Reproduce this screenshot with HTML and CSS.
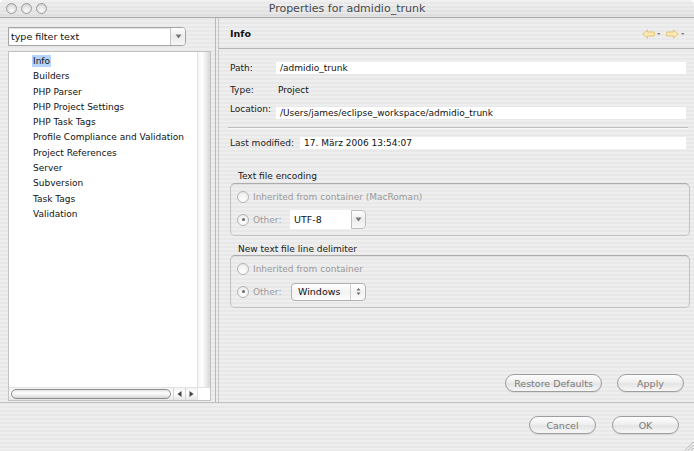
FILE: index.html
```html
<!DOCTYPE html>
<html>
<head>
<meta charset="utf-8">
<title>Properties for admidio_trunk</title>
<link rel="stylesheet" href="styles.css">
</head>
<body>
<div class="window">
  <div class="titlebar">
    <div class="lights"><span class="light"></span><span class="light"></span><span class="light"></span></div>
    <div class="title">Properties for admidio_trunk</div>
  </div>
  <div class="main">
    <div class="left">
      <div class="filter">
        <span class="filter-text">type filter text</span>
        <span class="filter-btn"><svg width="7" height="5" viewBox="0 0 7 5"><path d="M0.5 0.5 L6.5 0.5 L3.5 4.5 Z" fill="#777"/></svg></span>
      </div>
      <div class="list">
        <div class="list-body">
          <ul class="tree">
            <li><span class="sel">Info</span></li>
            <li>Builders</li>
            <li>PHP Parser</li>
            <li>PHP Project Settings</li>
            <li>PHP Task Tags</li>
            <li>Profile Compliance and Validation</li>
            <li>Project References</li>
            <li>Server</li>
            <li>Subversion</li>
            <li>Task Tags</li>
            <li>Validation</li>
          </ul>
          <div class="vscroll"></div>
        </div>
        <div class="hscroll">
          <div class="htrack"><div class="hthumb"></div></div>
          <div class="harrow"><svg width="5" height="6" viewBox="0 0 5 6"><path d="M4.5 0 L4.5 6 L0.5 3 Z" fill="#444"/></svg></div>
          <div class="harrow"><svg width="5" height="6" viewBox="0 0 5 6"><path d="M0.5 0 L0.5 6 L4.5 3 Z" fill="#444"/></svg></div>
          <div class="corner"></div>
        </div>
      </div>
    </div>
    <div class="right">
      <div class="header">
        <span class="htitle">Info</span>
        <span class="navs">
          <svg class="nav" width="20" height="10" viewBox="0 0 20 10"><path d="M0.7 5 L5.5 0.8 L5.5 3 L12.3 3 L12.3 7 L5.5 7 L5.5 9.2 Z" fill="#fbe9b6" stroke="#e3bf6c" stroke-width="0.9" stroke-linejoin="round"/><path d="M15 4 L18.5 4 L16.75 6 Z" fill="#7a7a7a"/></svg>
          <svg class="nav" width="20" height="10" viewBox="0 0 20 10"><path d="M12.3 5 L7.5 0.8 L7.5 3 L0.7 3 L0.7 7 L7.5 7 L7.5 9.2 Z" fill="#fbe9b6" stroke="#e3bf6c" stroke-width="0.9" stroke-linejoin="round"/><path d="M15 4 L18.5 4 L16.75 6 Z" fill="#7a7a7a"/></svg>
        </span>
      </div>
      <div class="props">
        <div class="row row-path"><span class="lbl">Path:</span><span class="box">/admidio_trunk</span></div>
        <div class="row row-type"><span class="lbl">Type:</span><span class="plain">Project</span></div>
        <div class="row row-loc"><span class="lbl lbl-up">Location:</span><span class="box">/Users/james/eclipse_workspace/admidio_trunk</span></div>
        <div class="sep"></div>
        <div class="row row-mod"><span class="lbl lbl-wide">Last modified:</span><span class="box">17. März 2006 13:54:07</span></div>
      </div>
      <div class="group-title first">Text file encoding</div>
      <div class="group">
        <div class="radio-row"><span class="radio"></span><span class="dim">Inherited from container (MacRoman)</span></div>
        <div class="radio-row tall"><span class="radio on"></span><span class="dim other">Other:</span>
          <span class="combo"><span class="combo-field">UTF-8</span><span class="combo-btn"><svg width="7" height="5" viewBox="0 0 7 5"><path d="M0.5 0.5 L6.5 0.5 L3.5 4.5 Z" fill="#777"/></svg></span></span>
        </div>
      </div>
      <div class="group-title second">New text file line delimiter</div>
      <div class="group">
        <div class="radio-row"><span class="radio"></span><span class="dim">Inherited from container</span></div>
        <div class="radio-row tall"><span class="radio on"></span><span class="dim other">Other:</span>
          <span class="popup"><span class="popup-text">Windows</span><span class="popup-arrows"><svg width="5" height="9" viewBox="0 0 5 9"><path d="M0.5 3.5 L4.5 3.5 L2.5 1 Z M0.5 5.5 L4.5 5.5 L2.5 8 Z" fill="#666"/></svg></span></span>
        </div>
      </div>
      <div class="actions">
        <span class="btn btn-wide">Restore Defaults</span>
        <span class="btn">Apply</span>
      </div>
    </div>
  </div>
  <div class="footer">
    <span class="btn">Cancel</span>
    <span class="btn">OK</span>
    <svg class="grip" width="11" height="11" viewBox="0 0 11 11"><path d="M10.5 2 L2 10.5 M10.5 5 L5 10.5 M10.5 8 L8 10.5" stroke="#8a8a8a" stroke-width="0.8"/><path d="M10.5 3 L3 10.5 M10.5 6 L6 10.5 M10.5 9 L9 10.5" stroke="#ffffff" stroke-width="0.8"/></svg>
  </div>
</div>
</body>
</html>
```

FILE: styles.css
```css
* { box-sizing: border-box; }
html, body { margin: 0; padding: 0; background: #ffffff; }
body {
  width: 694px;
  height: 451px;
  overflow: hidden;
  font-family: "DejaVu Sans", "Liberation Sans", sans-serif;
  font-size: 9px;
  color: #1a1a1a;
}
.window {
  width: 694px;
  height: 451px;
  display: flex;
  flex-direction: column;
  border-radius: 5px 5px 0 0;
  overflow: hidden;
  background: repeating-linear-gradient(180deg, #eeeeee 0 2px, #e8e8e8 2px 4px);
}

/* title bar */
.titlebar {
  height: 18px;
  flex: none;
  position: relative;
  display: flex;
  align-items: center;
  border-bottom: 1px solid #a9a9a9;
  background:
    linear-gradient(180deg, rgba(255,255,255,0.25), rgba(0,0,0,0.03)),
    repeating-linear-gradient(180deg, #ececec 0 2px, #e4e4e4 2px 4px);
}
.lights { display: flex; gap: 4px; padding-left: 6px; }
.light {
  width: 11px;
  height: 11px;
  border-radius: 50%;
  border: 1px solid #9c9c9c;
  background: radial-gradient(circle at 50% 70%, #fbfbfb 0, #e2e2e2 55%, #c4c4c4 100%);
}
.title {
  position: absolute;
  left: 0;
  right: 0;
  top: 2px;
  text-align: center;
  font-size: 11px;
  color: #4a4a4a;
  line-height: 13px;
}

/* main */
.main {
  height: 384px;
  flex: none;
  display: flex;
}
.left {
  width: 216px;
  flex: none;
  padding: 9px 0 0 8px;
  border-right: 1px solid #b9b9b9;
}
.filter {
  width: 178px;
  height: 19px;
  display: flex;
  background: #fff;
  border: 1px solid #a4a4a4;
  border-radius: 0 4px 4px 0;
  box-shadow: inset 0 1px 1px rgba(0,0,0,0.12);
}
.filter-text {
  flex: 1;
  padding-left: 2px;
  line-height: 17px;
  font-size: 9.5px;
  color: #111;
}
.filter-btn {
  width: 15px;
  border-left: 1px solid #c4c4c4;
  border-radius: 0 3px 3px 0;
  display: flex;
  align-items: center;
  justify-content: center;
  background: linear-gradient(180deg, #fefefe, #ececec 50%, #f6f6f6);
}
.list {
  margin-top: 5px;
  width: 203px;
  height: 350px;
  border: 1px solid #c2c2c2;
  background: #fff;
  display: flex;
  flex-direction: column;
}
.list-body { flex: 1; display: flex; }
.tree {
  flex: 1;
  list-style: none;
  margin: 0;
  padding: 2px 0 0 24px;
}
.tree li {
  height: 15.3px;
  line-height: 15.3px;
  white-space: nowrap;
  color: #111;
}
.sel {
  background: #b6d4fb;
  padding: 1px 1px;
  margin-left: -1px;
}
.vscroll {
  width: 13px;
  flex: none;
  background: linear-gradient(90deg, #f4f4f4, #ffffff 35%, #e9e9e9 70%, #d8d8d8);
  border-left: 1px solid #e2e2e2;
}
.hscroll {
  height: 13px;
  flex: none;
  display: flex;
  border-top: 1px solid #e2e2e2;
  background: linear-gradient(180deg, #f2f2f2, #ffffff 40%, #e6e6e6);
}
.htrack { flex: 1; padding: 1px 0 1px 2px; }
.hthumb {
  width: 160px;
  height: 10px;
  border: 1px solid #8c8c8c;
  border-radius: 6px;
  background: linear-gradient(180deg, #e4e4e4, #ffffff 40%, #d4d4d4);
}
.harrow {
  width: 12px;
  display: flex;
  align-items: center;
  justify-content: center;
  border-left: 1px solid #d6d6d6;
}
.corner { width: 13px; background: #fff; border-left: 1px solid #e2e2e2; }

/* right */
.right {
  flex: 1;
  margin-left: 2px;
  border-left: 1px solid #c8c8c8;
  display: flex;
  flex-direction: column;
  padding: 0 4px 10px 11px;
}
.header {
  height: 31px;
  margin: 0 -4px 0 -11px;
  padding: 0 6px 0 11px;
  display: flex;
  align-items: center;
  justify-content: space-between;
  border-bottom: 1px solid #b3b3b3;
}
.htitle { font-weight: bold; font-size: 9.5px; color: #111; }
.navs { display: flex; gap: 4px; margin-top: 1px; margin-right: 2px; }

.props { margin-right: 4px; }
.row { display: flex; align-items: center; height: 12px; }
.row-path { margin-top: 13px; }
.row-type { margin-top: 10px; }
.row-loc { margin-top: 11px; }
.row-mod { margin-top: 8px; }
.lbl { width: 46px; flex: none; color: #222; }
.lbl-up { position: relative; top: -4px; }
.lbl-wide { width: 70px; }
.box {
  flex: 1;
  height: 12px;
  line-height: 12px;
  background: #fff;
  padding-left: 4px;
  color: #111;
}
.plain { padding-left: 2px; color: #111; }
.sep {
  margin: 8px -2px 0 -2px;
  height: 1px;
  background: #bdbdbd;
  border-bottom: 1px solid #f8f8f8;
  box-sizing: content-box;
}

.group-title {
  margin: 7px 0 0 8px;
  height: 12px;
  line-height: 12px;
  color: #1a1a1a;
}
.group-title.first { margin-top: 21px; margin-bottom: 1px; }
.group {
  height: 53px;
  border: 1px solid #c3c3c3;
  border-top-color: #acacac;
  border-radius: 5px;
  box-shadow: inset 0 1px 1px rgba(0,0,0,0.07);
  padding: 6px 6px 0 6px;
  display: flex;
  flex-direction: column;
  gap: 6px;
}
.radio-row { display: flex; align-items: center; height: 14px; }
.radio-row.tall { height: 19px; }
.radio {
  width: 12px;
  height: 12px;
  border-radius: 50%;
  border: 1px solid #b4b4b4;
  background: radial-gradient(circle at 50% 70%, #ffffff 0, #f2f2f2 60%, #dcdcdc 100%);
  margin-right: 4px;
  flex: none;
  position: relative;
}
.radio.on::after {
  content: "";
  position: absolute;
  left: 3.5px;
  top: 3.5px;
  width: 3px;
  height: 3px;
  border-radius: 50%;
  background: #6a6a6a;
}
.dim { color: #9a9a9a; }
.other { width: 37px; }
.combo {
  width: 76px;
  height: 19px;
  display: flex;
  background: #fff;
  border-radius: 0 4px 4px 0;
}
.combo-field { flex: 1; padding-left: 4px; line-height: 19px; color: #111; font-size: 9.5px; }
.combo-btn {
  width: 15px;
  display: flex;
  align-items: center;
  justify-content: center;
  border: 1px solid #bdbdbd;
  border-radius: 0 4px 4px 0;
  background: linear-gradient(180deg, #fefefe, #ededed 50%, #f7f7f7);
}
.popup {
  width: 75px;
  height: 18px;
  margin-left: 1px;
  display: flex;
  border: 1px solid #b2b2b2;
  border-radius: 4px;
  background: linear-gradient(180deg, #ffffff, #f3f3f3 50%, #fbfbfb);
}
.popup-text { flex: 1; padding-left: 6px; line-height: 16px; font-size: 9.5px; color: #111; }
.popup-arrows {
  width: 15px;
  display: flex;
  align-items: center;
  justify-content: center;
  border-left: 1px solid #d0d0d0;
}

.actions {
  margin-top: auto;
  display: flex;
  justify-content: flex-end;
  gap: 15px;
  padding-right: 6px;
}
.btn {
  width: 67px;
  height: 18px;
  border: 1px solid #9d9d9d;
  border-radius: 9px;
  background: linear-gradient(180deg, #fdfdfd, #efefef 45%, #e4e4e4 55%, #f7f7f7);
  display: flex;
  align-items: center;
  justify-content: center;
  color: #7a7a7a;
  font-size: 9.5px;
  box-shadow: 0 1px 1px rgba(0,0,0,0.08);
}
.btn-wide { width: 97px; }

/* footer */
.footer {
  flex: 1;
  border-top: 1px solid #c0c0c0;
  display: flex;
  justify-content: flex-end;
  align-items: flex-start;
  gap: 16px;
  padding: 13px 15px 0 0;
  position: relative;
}
.grip { position: absolute; right: 0; bottom: 0; }
```
